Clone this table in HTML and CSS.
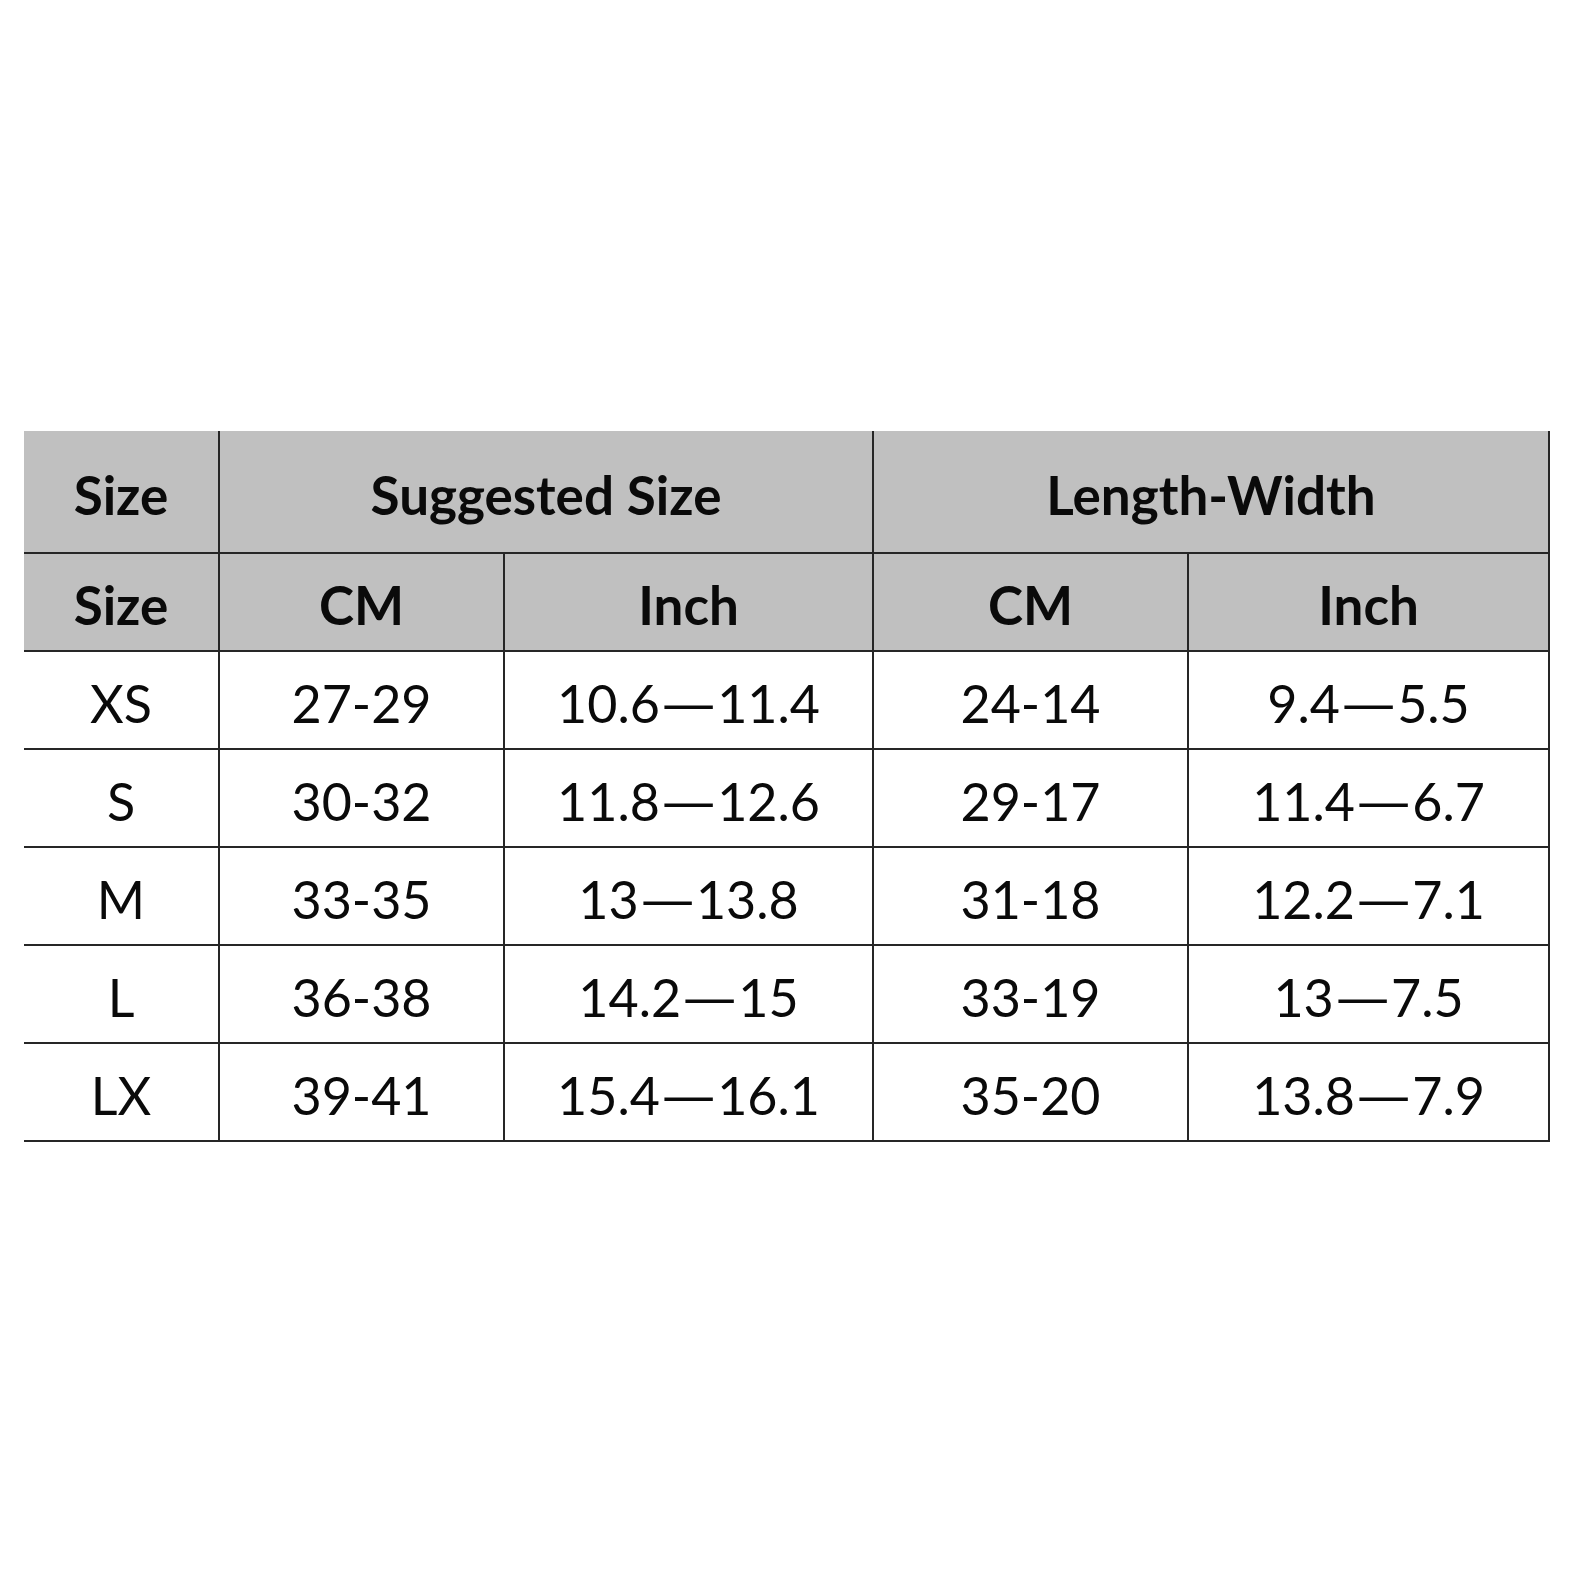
FILE: index.html
```html
<!DOCTYPE html>
<html>
<head>
<meta charset="utf-8">
<link rel="stylesheet" href="styles.css">
</head>
<body>
<table class="chart">
  <colgroup>
    <col class="c1"><col class="c2"><col class="c3"><col class="c4"><col class="c5">
  </colgroup>
  <tr class="h1">
    <th>Size</th>
    <th colspan="2">Suggested Size</th>
    <th colspan="2">Length-Width</th>
  </tr>
  <tr class="h2">
    <th>Size</th><th>CM</th><th>Inch</th><th>CM</th><th>Inch</th>
  </tr>
  <tr><td>XS</td><td>27-29</td><td>10.6<span class="dash">—</span>11.4</td><td>24-14</td><td>9.4<span class="dash">—</span>5.5</td></tr>
  <tr><td>S</td><td>30-32</td><td>11.8<span class="dash">—</span>12.6</td><td>29-17</td><td>11.4<span class="dash">—</span>6.7</td></tr>
  <tr><td>M</td><td>33-35</td><td>13<span class="dash">—</span>13.8</td><td>31-18</td><td>12.2<span class="dash">—</span>7.1</td></tr>
  <tr><td>L</td><td>36-38</td><td>14.2<span class="dash">—</span>15</td><td>33-19</td><td>13<span class="dash">—</span>7.5</td></tr>
  <tr><td>LX</td><td>39-41</td><td>15.4<span class="dash">—</span>16.1</td><td>35-20</td><td>13.8<span class="dash">—</span>7.9</td></tr>
</table>
</body>
</html>
```
FILE: styles.css
```css
html, body {
  margin: 0;
  padding: 0;
  background: #ffffff;
}
body {
  padding-top: 431px;
  padding-left: 24px;
}
.chart {
  border-collapse: collapse;
  table-layout: fixed;
  width: 1525px;
  font-family: Lato, "Open Sans", sans-serif;
  color: #0a0a0a;
}
.c1 { width: 195px; }
.c2 { width: 285px; }
.c3 { width: 369px; }
.c4 { width: 315px; }
.c5 { width: 361px; }
.chart th, .chart td {
  border: 2px solid #262626;
  text-align: center;
  vertical-align: middle;
  padding: 5px 0 0 0;
}
.chart tr > :first-child { border-left: none; }
.h1 th { border-top: none; }
.chart th {
  background: #c0c0c0;
  font-weight: 700;
  font-size: 53px;
}
.chart td {
  font-weight: 400;
  font-size: 52px;
}
.dash {
  display: inline-block;
  transform: scaleX(1.4);
  margin: 0 8px;
}
.h1 { height: 122px; }
.h2 { height: 98px; }
.chart tr:not(.h1):not(.h2) { height: 98px; }
```
